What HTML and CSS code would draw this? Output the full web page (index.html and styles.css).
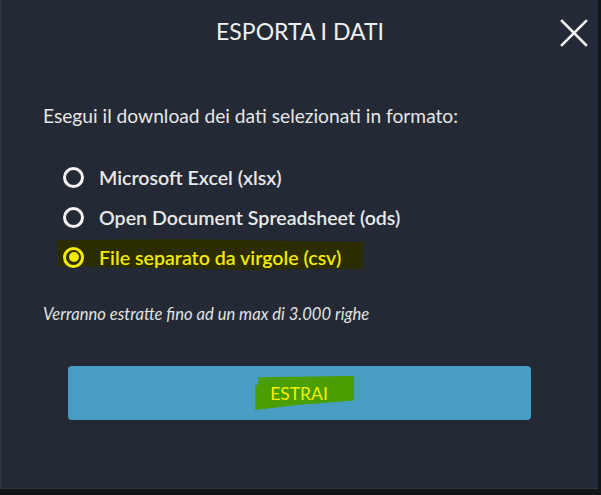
FILE: index.html
```html
<!DOCTYPE html>
<html lang="it">
<head>
<meta charset="utf-8">
<title>Esporta i dati</title>
<link rel="stylesheet" href="styles.css">
</head>
<body>
<div class="dialog">
  <header class="dialog-header">
    <h1 class="dialog-title">ESPORTA I DATI</h1>
    <button class="close-btn" aria-label="Chiudi">
      <svg width="28" height="28" viewBox="0 0 28 28"><path d="M2 2 L26 26 M26 2 L2 26" stroke="#f2f2f2" stroke-width="2.6" stroke-linecap="square" fill="none"/></svg>
    </button>
  </header>
  <div class="dialog-body">
    <p class="intro">Esegui il download dei dati selezionati in formato:</p>
    <ul class="options">
      <li class="option"><span class="radio"></span><span class="label">Microsoft Excel (xlsx)</span></li>
      <li class="option"><span class="radio"></span><span class="label">Open Document Spreadsheet (ods)</span></li>
      <li class="option selected"><span class="radio"></span><span class="label">File separato da virgole (csv)</span></li>
    </ul>
    <p class="note">Verranno estratte fino ad un max di 3.000 righe</p>
    <button class="extract-btn"><span class="extract-label">ESTRAI</span></button>
  </div>
</div>
</body>
</html>
```

FILE: styles.css
```css
html, body {
  margin: 0;
  padding: 0;
}
body {
  background: #121518;
  width: 601px;
  height: 495px;
  overflow: hidden;
  font-family: Lato, "Open Sans", sans-serif;
}
.dialog {
  width: 596px;
  height: 488px;
  background: #232a35;
  border-left: 2px solid #2e343d;
  border-bottom: 1px solid #2e343d;
  color: #e9e9e9;
  box-sizing: content-box;
}
.dialog-header {
  position: relative;
  height: 61px;
  display: flex;
  align-items: center;
  justify-content: center;
}
.dialog-title {
  margin: 0;
  font-size: 23px;
  line-height: 28px;
  font-weight: 400;
  color: #f0f0f0;
}
.close-btn {
  position: absolute;
  right: 10px;
  top: 19px;
  width: 28px;
  height: 28px;
  padding: 0;
  border: 0;
  background: transparent;
  display: flex;
}
.dialog-body {
  padding: 43px 0 0 41px;
}
.intro {
  margin: 0;
  font-size: 19.2px;
  line-height: 24px;
  color: #e6e6e6;
}
.options {
  list-style: none;
  margin: 37px 0 0 0;
  padding: 0 0 0 20px;
  display: flex;
  flex-direction: column;
  gap: 16px;
}
.option {
  position: relative;
  display: flex;
  align-items: center;
  gap: 15px;
  height: 24px;
  font-size: 19.6px;
  font-weight: 600;
  color: #e8e8e8;
}
.radio {
  width: 15px;
  height: 15px;
  border: 3px solid #f4f4f4;
  border-radius: 50%;
  flex: none;
  position: relative;
}
.option.selected {
  color: #f2ea00;
}
.option.selected::before {
  content: "";
  position: absolute;
  left: -6px;
  top: -6px;
  width: 306px;
  height: 31px;
  background: #2b2c00;
  clip-path: polygon(0 4%, 40% 0, 100% 10%, 100% 96%, 60% 100%, 0 88%);
  z-index: 0;
}
.option.selected .radio {
  border-color: #f2ea00;
  z-index: 1;
}
.option.selected .radio::after {
  content: "";
  position: absolute;
  left: 2.5px;
  top: 2.5px;
  width: 10px;
  height: 10px;
  border-radius: 50%;
  background: #f2ea00;
}
.option .label {
  position: relative;
  z-index: 1;
}
.note {
  margin: 35px 0 0 0;
  font-size: 16.6px;
  font-style: italic;
  line-height: 20px;
  color: #e2e2e2;
}
.extract-btn {
  position: relative;
  z-index: 0;
  display: flex;
  align-items: center;
  justify-content: center;
  width: 463px;
  height: 54px;
  margin: 42px 0 0 25px;
  border: 0;
  border-radius: 4px;
  background: #489dc3;
  font-family: Lato, "Open Sans", sans-serif;
  padding: 0;
}
.extract-label {
  position: relative;
  font-size: 17.5px;
  font-weight: 400;
  color: #f4ee00;
  padding: 7px 26px 6px 15px;
  margin-left: 10px;
}
.extract-label::before {
  content: "";
  position: absolute;
  inset: 0;
  background: #4a9e00;
  clip-path: polygon(0 26%, 3% 26%, 3% 4%, 100% 0, 100% 72%, 40% 86%, 0 100%);
  z-index: -1;
}
```
